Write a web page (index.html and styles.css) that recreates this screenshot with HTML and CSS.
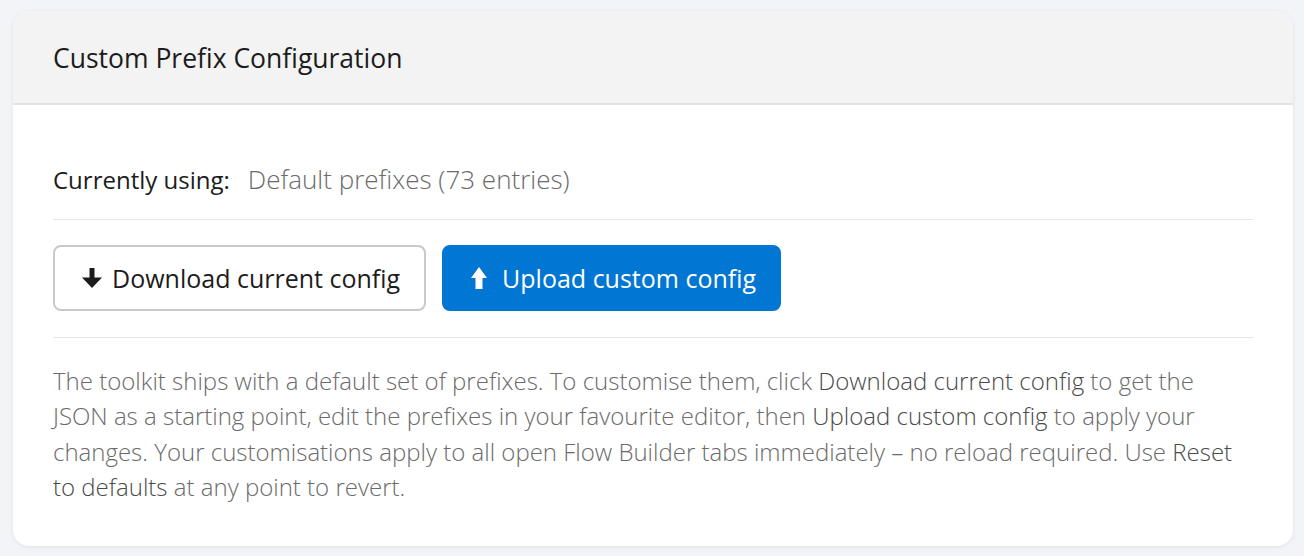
FILE: index.html
```html
<!DOCTYPE html>
<html lang="en">
<head>
<meta charset="utf-8">
<title>Custom Prefix Configuration</title>
<link rel="stylesheet" href="styles.css">
</head>
<body>
<div class="card">
  <div class="card-header">
    <h2 class="card-title">Custom Prefix Configuration</h2>
  </div>
  <div class="card-body">
    <div class="status-row">
      <span class="status-label">Currently using:</span>
      <span class="status-value">Default prefixes (73 entries)</span>
    </div>
    <div class="actions">
      <button class="btn btn-neutral">
        <svg class="icon-down" viewBox="0 0 20 20" aria-hidden="true"><path d="M7.5 0h5v9.5H20L10 20 0 9.5h7.5z" fill="currentColor"/></svg>
        <span>Download current config</span>
      </button>
      <button class="btn btn-brand">
        <svg class="icon-up" viewBox="0 0 16 22" aria-hidden="true"><path d="M4.5 22h7V11H16L8 0 0 11h4.5z" fill="currentColor"/></svg>
        <span>Upload custom config</span>
      </button>
    </div>
    <p class="help">The toolkit ships with a default set of prefixes. To customise them, click <em>Download current config</em> to get the JSON as a starting point, edit the prefixes in your favourite editor, then <em>Upload custom config</em> to apply your changes. Your customisations apply to all open Flow Builder tabs immediately – no reload required. Use <em>Reset to defaults</em> at any point to revert.</p>
  </div>
</div>
</body>
</html>
```

FILE: styles.css
```css
* { box-sizing: border-box; }
html, body { margin: 0; padding: 0; }
body {
  background: #f3f4f8;
  font-family: "Open Sans", Lato, sans-serif;
  color: #1c1c1c;
  padding: 11px 11px 10px 13px;
}
.card {
  background: #fff;
  border-radius: 16px;
  box-shadow: 0 1px 4px rgba(0,0,0,0.08);
  overflow: hidden;
}
.card-header {
  background: #f3f3f3;
  height: 94px;
  border-bottom: 2px solid #e3e3e3;
  padding: 1px 40px 0;
  display: flex;
  align-items: center;
}
.card-title {
  margin: 0;
  font-size: 26.5px;
  font-weight: 400;
  color: #1c1c1c;
}
.card-body {
  padding: 59px 40px 42px;
}
.status-row {
  height: 56px;
  line-height: 30px;
  padding-bottom: 25px;
  border-bottom: 1px solid #e8e8e8;
  display: flex;
  align-items: baseline;
  gap: 18px;
}
.status-label { color: #1c1c1c; font-size: 24px; }
.status-value { color: #6b6b6b; font-weight: 300; font-size: 26px; }
.actions {
  display: flex;
  gap: 16px;
  padding: 25px 0 26px;
  border-bottom: 1px solid #e8e8e8;
}
.btn {
  height: 66px;
  border-radius: 8px;
  font-family: inherit;
  font-size: 25px;
  display: flex;
  align-items: center;
  cursor: pointer;
}
.btn-neutral {
  background: #fff;
  border: 2px solid #c9c9c9;
  color: #1c1c1c;
  padding: 0 24px 0 27px;
  gap: 10px;
}
.btn-brand {
  background: #0176d3;
  border: 2px solid #0176d3;
  color: #fff;
  padding: 0 23px 0 27px;
  gap: 15px;
}
.icon-down { width: 20px; height: 20px; }
.icon-up { width: 16px; height: 22px; }
.help {
  margin: 25px 0 0;
  font-size: 24px;
  line-height: 35.3px;
  color: #6b6b6b;
  font-weight: 300;
}
.help em { font-style: normal; color: #4a4a4a; }
```
